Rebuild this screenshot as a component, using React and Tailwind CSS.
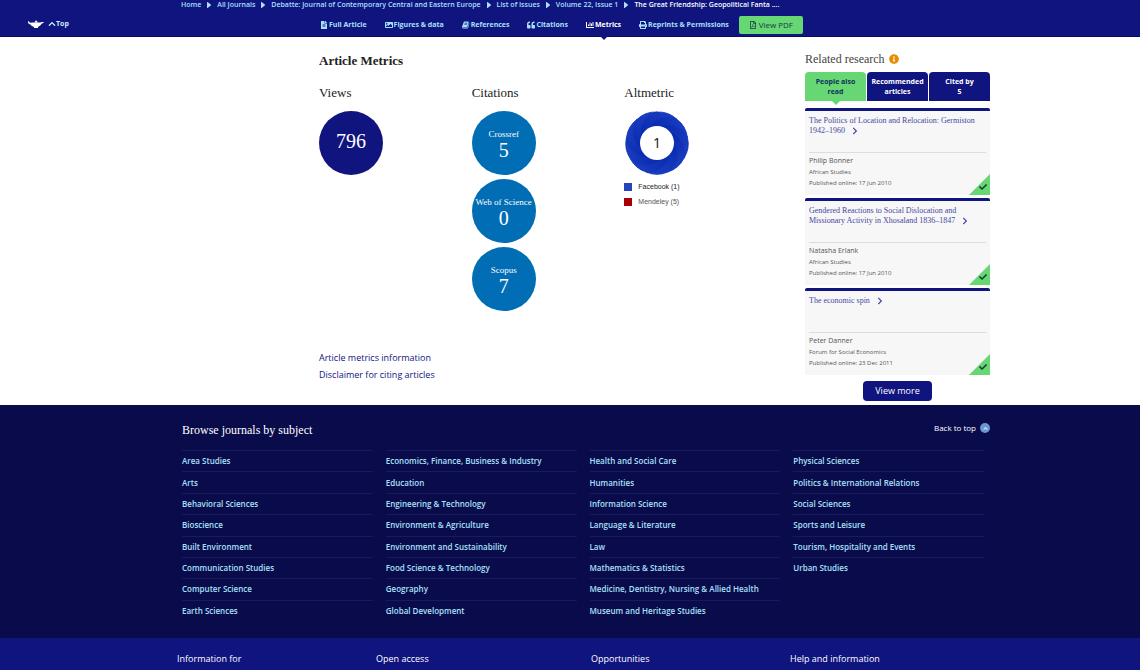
import React from 'react';
import { FaFileAlt, FaImage, FaQuoteLeft, FaChartBar, FaPrint, FaRegFilePdf, FaChevronUp, FaChevronRight, FaPlay, FaCheck, FaInfoCircle } from 'react-icons/fa';

const breadcrumbs = [
    'Home',
    'All Journals',
    'Debatte: Journal of Contemporary Central and Eastern Europe',
    'List of Issues',
    'Volume 22, Issue 1'
];

const BookIcon = ({ className }) => (
    <svg viewBox="0 0 1792 1792" fill="currentColor" className={className} aria-hidden="true">
        <path d="M1639 478q40 57 18 129l-275 906q-19 64-76.5 107.5t-122.5 43.5h-923q-77 0-148.5-53.5t-99.5-131.5q-24-67-2-127 0-4 3-27t4-37q1-8-3-21.5t-3-19.5q2-11 8-21t16.5-23.5 16.5-23.5q23-38 45-91.5t30-91.5q3-10 .5-30t-.5-28q3-11 17-28t17-23q21-36 42-92t25-90q1-9-2.5-32t.5-28q4-13 22-30.5t22-22.5q19-26 42.5-84.5t27.5-96.5q1-8-3-25.5t-2-26.5q2-8 9-18t18-23 17-21q8-12 16.5-30.5t15-35 16-36 19.5-32 26.5-23.5 36-11.5 47.5 5.5l-1 3q38-9 51-9h761q74 0 114 56t18 130l-274 906q-36 119-71.5 153.5t-128.5 34.5h-869q-27 0-38 15-11 16-1 43 24 70 144 70h923q29 0 56-15.5t35-41.5l300-987q7-22 5-57 38 15 59 43zm-1064 2q-4 13 2 22.5t20 9.5h608q13 0 25.5-9.5t16.5-22.5l21-64q4-13-2-22.5t-20-9.5h-608q-13 0-25.5 9.5t-16.5 22.5zm-83 256q-4 13 2 22.5t20 9.5h608q13 0 25.5-9.5t16.5-22.5l21-64q4-13-2-22.5t-20-9.5h-608q-13 0-25.5 9.5t-16.5 22.5z" />
    </svg>
);

const tabs = [
    { label: 'Full Article', icon: FaFileAlt },
    { label: 'Figures & data', icon: FaImage },
    { label: 'References', icon: BookIcon },
    { label: 'Citations', icon: FaQuoteLeft },
    { label: 'Metrics', icon: FaChartBar, active: true },
    { label: 'Reprints & Permissions', icon: FaPrint }
];

const citations = [
    { source: 'Crossref', count: 5 },
    { source: 'Web of Science', count: 0 },
    { source: 'Scopus', count: 7 }
];

const related = [
    {
        title: 'The Politics of Location and Relocation: Germiston 1942–1960',
        author: 'Philip Bonner',
        journal: 'African Studies',
        date: '17 Jun 2010'
    },
    {
        title: 'Gendered Reactions to Social Dislocation and Missionary Activity in Xhosaland 1836–1847',
        author: 'Natasha Erlank',
        journal: 'African Studies',
        date: '17 Jun 2010'
    },
    {
        title: 'The economic spin',
        author: 'Peter Danner',
        journal: 'Forum for Social Economics',
        date: '23 Dec 2011'
    }
];

const subjects = [
    ['Area Studies', 'Arts', 'Behavioral Sciences', 'Bioscience', 'Built Environment', 'Communication Studies', 'Computer Science', 'Earth Sciences'],
    ['Economics, Finance, Business & Industry', 'Education', 'Engineering & Technology', 'Environment & Agriculture', 'Environment and Sustainability', 'Food Science & Technology', 'Geography', 'Global Development'],
    ['Health and Social Care', 'Humanities', 'Information Science', 'Language & Literature', 'Law', 'Mathematics & Statistics', 'Medicine, Dentistry, Nursing & Allied Health', 'Museum and Heritage Studies'],
    ['Physical Sciences', 'Politics & International Relations', 'Social Sciences', 'Sports and Leisure', 'Tourism, Hospitality and Events', 'Urban Studies']
];

const LampLogo = () => (
    <svg viewBox="0 0 32 18" fill="#fff" className="w-4 h-[9px]" aria-hidden="true">
        <path d="M0 2c2 0 2 3 4 3 2 1 4 0 6 0h12c3 1 5-2 9-1 1 1 0 2-1 2-3 1-4 4-7 6-1 1-2 1-3 2v2h-8v-2c-3-1-6-3-7-5-4-1-6-4-5-7z" />
        <path d="M13 5c0-2 2-2 2-3 0-2 2-2 2 0 0 1 3 1 3 3z" />
    </svg>
);

const AltmetricDonut = ({ score }) => (
    <svg viewBox="-1 0 66 64" className="w-[66px] h-16" role="img" aria-label={`Altmetric score ${score}`}>
        <defs>
            <linearGradient id="blade" gradientUnits="userSpaceOnUse" x1="58" y1="12" x2="28" y2="16">
                <stop offset="0" stopColor="#1a3cc0" />
                <stop offset="1" stopColor="#0a2cb0" />
            </linearGradient>
        </defs>
        <circle cx="32" cy="32" r="30" fill="#1236b4" />
        {[0, 40, 80, 120, 160, 200, 240, 280, 320].map((angle) => (
            <path
                key={angle}
                d="M32 16C44 10 57 16 62.500 26.600Q61 15 51.900 8.300C40.900 3.700 27.100 7.400 21.700 19.700z"
                fill="url(#blade)"
                stroke="#1236b8"
                strokeWidth="0.8"
                transform={`rotate(${angle} 32 32)`}
            />
        ))}
        <circle cx="32" cy="32" r="17" fill="#fff" />
        <text x="32" y="37" textAnchor="middle" fontSize="14" fill="#111" className="font-medium font-['Open_Sans',sans-serif]">{score}</text>
    </svg>
);

const Header = () => (
    <header className="bg-[#10147e] border-b border-[#0a0c60]">
        <div className="grid grid-cols-[181fr_959fr] h-9">
            <a href="#top" className="flex items-center gap-1 pl-7 pt-3 text-[7px] font-bold text-[#cdeaff]">
                <LampLogo />
                <span className="flex items-center"><FaChevronUp className="w-2 h-2" />Top</span>
            </a>
            <div className="min-w-0">
                <nav aria-label="Breadcrumb" className="flex items-center gap-1.5 h-[10px] whitespace-nowrap text-[7px] font-semibold text-[#a9e0fb]">
                    {breadcrumbs.map((crumb) => (
                        <React.Fragment key={crumb}>
                            <a href="#crumb">{crumb}</a>
                            <FaPlay className="w-1 h-1.5 shrink-0" preserveAspectRatio="none" />
                        </React.Fragment>
                    ))}
                    <span className="font-semibold text-white">The Great Friendship: Geopolitical Fanta ....</span>
                </nav>
                <nav aria-label="Article" className="flex items-center h-[26px] pl-[139px] pt-1 whitespace-nowrap text-[7px] font-bold text-[#a9e0fb]">
                    <div className="flex items-center gap-[18px]">
                        {tabs.map(({ label, icon: Icon, active }) => (
                            <a key={label} href="#tab" className={`relative flex items-center gap-px ${active ? 'text-white' : ''}`}>
                                <Icon className="w-2 h-2" />
                                {label}
                                {active && <span className="absolute left-1/2 top-4 -ml-1 border-x-4 border-t-4 border-x-transparent border-t-[#10147e]" />}
                            </a>
                        ))}
                    </div>
                    <button type="button" className="flex items-center justify-center gap-0.5 ml-[10px] w-16 h-[18px] rounded-xs bg-[#66d773] text-[8px] font-normal text-[#163a4a]">
                        <FaRegFilePdf className="w-2 h-2" />
                        View PDF
                    </button>
                </nav>
            </div>
        </div>
    </header>
);

const Circle = ({ label, value, className }) => (
    <div className={`flex flex-col items-center justify-center w-16 h-16 rounded-full whitespace-nowrap text-white ${label ? 'pt-0.5' : 'pb-1'} ${className}`}>
        {label && <span className="text-[9px] leading-3">{label}</span>}
        <span className="text-xl leading-5">{value}</span>
    </div>
);

const Metrics = () => (
    <section className="flex-1 text-[#222]">
        <h1 className="mt-4 text-[13px] leading-4 font-bold font-['Liberation_Serif',serif]">Article Metrics</h1>
        <div className="grid grid-cols-3 mt-4 font-['Liberation_Serif',serif]">
            <div>
                <h2 className="mb-[10px] text-[13px] leading-4">Views</h2>
                <Circle value="796" className="bg-[#10147e]" />
            </div>
            <div>
                <h2 className="mb-[10px] text-[13px] leading-4">Citations</h2>
                <div className="flex flex-col gap-1">
                    {citations.map(({ source, count }) => (
                        <Circle key={source} label={source} value={count} className="bg-[#006db4]" />
                    ))}
                </div>
            </div>
            <div>
                <h2 className="mb-[10px] text-[13px] leading-4">Altmetric</h2>
                <AltmetricDonut score={1} />
                <ul className="mt-1 text-[7px] leading-[15px] font-['Liberation_Sans',sans-serif]">
                    <li className="flex items-center gap-1.5"><span className="w-2 h-2 bg-[#2445bd]" />Facebook (1)</li>
                    <li className="flex items-center gap-1.5 text-[#555]"><span className="w-2 h-2 bg-[#a60000]" />Mendeley (5)</li>
                </ul>
            </div>
        </div>
        <div className="flex flex-col items-start mt-[38px] text-[9px] leading-[17px] text-[#10147e]">
            <a href="#info">Article metrics information</a>
            <a href="#disclaimer">Disclaimer for citing articles</a>
        </div>
    </section>
);

const RelatedCard = ({ title, author, journal, date }) => (
    <article className="relative h-[87px] px-1 border-t-3 border-[#10147e] rounded-t-xs bg-[#f7f7f7] text-[#555]">
        <h3 className="h-[41px] pt-[5px] text-[8px] leading-[10px] text-[#4547a3] font-['Liberation_Serif',serif]">
            <a href="#article">{title}<FaChevronRight className="inline ml-1.5 w-2 h-2" /></a>
        </h3>
        <div className="pt-[2px] border-t border-[#ddd]">
            <p className="text-[7px] leading-3">{author}</p>
            <p className="text-[6px] leading-[11px]">{journal}</p>
            <p className="text-[6px] leading-[11px]">Published online: {date}</p>
        </div>
        <svg viewBox="0 0 21 21" className="absolute right-0 bottom-0 w-[21px] h-[21px]" aria-hidden="true">
            <path d="M21 0v21H0z" fill="#66d773" />
        </svg>
        <FaCheck className="absolute right-[3px] bottom-1 w-2 h-2 text-[#163a3a]" />
    </article>
);

const Related = () => (
    <aside className="w-[185px] shrink-0">
        <h2 className="flex items-center gap-1 mt-[14px] text-[12px] leading-4 text-[#444] font-['Liberation_Serif',serif]">
            Related research
            <FaInfoCircle className="w-[10px] h-[10px] text-[#e88d00]" />
        </h2>
        <div className="grid grid-cols-3 gap-px mt-[5px] text-[7px] leading-[10px] font-bold text-white">
            <button type="button" className="relative h-[29px] rounded-t-sm bg-[#66d773] text-[#10315e]">
                People also<br />read
                <span className="absolute left-1/2 top-full -ml-1 border-x-4 border-t-4 border-x-transparent border-t-[#66d773]" />
            </button>
            <button type="button" className="h-[29px] rounded-t-sm bg-[#10147e]">Recommended<br />articles</button>
            <button type="button" className="h-[29px] rounded-t-sm bg-[#10147e]">Cited by<br />5</button>
        </div>
        <div className="flex flex-col gap-[3px] mt-[7px]">
            {related.map((item) => (
                <RelatedCard key={item.title} {...item} />
            ))}
        </div>
        <div className="flex justify-center mt-[6px] mb-1">
            <button type="button" className="w-[69px] h-5 rounded bg-[#10147e] text-[9px] text-white">View more</button>
        </div>
    </aside>
);

const Subjects = () => (
    <section className="bg-[#090b4a] pb-[17px]">
        <div className="max-w-[776px] mx-auto">
            <div className="w-[808px]">
                <div className="flex items-start justify-between pt-4 h-[45px]">
                    <h2 className="text-[12px] leading-[18px] text-white font-['Liberation_Serif',serif]">Browse journals by subject</h2>
                    <a href="#top" className="flex items-center gap-1 leading-[14px] text-[8px] text-white">
                        Back to top
                        <span className="flex items-center justify-center w-[10px] h-[10px] rounded-full bg-[#6c95d4]">
                            <FaChevronUp className="w-[5px] h-[5px]" />
                        </span>
                    </a>
                </div>
                <div className="grid grid-cols-4 gap-x-[13px] mr-1.5 text-[8px] font-semibold text-[#a9e0fb]">
                    {subjects.map((column) => (
                        <ul key={column[0]} className="grid grid-rows-8 min-h-[171px]">
                            {column.map((name) => (
                                <li key={name} className="flex items-center border-t border-[#171a5c] whitespace-nowrap">
                                    <a href="#subject">{name}</a>
                                </li>
                            ))}
                        </ul>
                    ))}
                </div>
            </div>
        </div>
    </section>
);

const Footer = () => (
    <footer className="h-8 bg-[#10147e] text-[9px] leading-[14px] text-white overflow-hidden">
        <div className="grid grid-cols-[199fr_215fr_199fr_173fr] max-w-[786px] mx-auto pt-[14px]">
            <h3>Information for</h3>
            <h3>Open access</h3>
            <h3>Opportunities</h3>
            <h3>Help and information</h3>
        </div>
    </footer>
);

const App = () => (
    <div className="bg-white font-['Open_Sans',sans-serif]">
        <Header />
        <main className="flex max-w-[840px] mx-auto pl-[169px]">
            <div className="flex flex-1">
                <div className="flex w-[458px]">
                    <Metrics />
                </div>
            </div>
            <Related />
        </main>
        <Subjects />
        <Footer />
    </div>
);

export default App;
